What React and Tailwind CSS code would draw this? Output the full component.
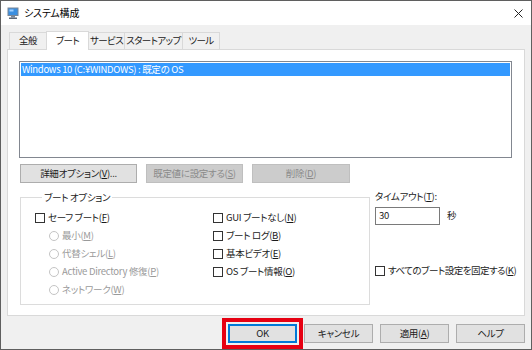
import React from 'react';

const font = { fontFamily: '"Noto Sans CJK JP", sans-serif', fontFeatureSettings: '"palt"' };

function U({ children }) {
  return <span className="underline underline-offset-[1px]">{children}</span>;
}

function Check({ children }) {
  return (
    <div className="flex items-center h-[18px] text-[#1a1a1a]">
      <span className="w-[10px] h-[10px] border border-[#333333] bg-white mr-[3px] shrink-0" />
      <span className="whitespace-nowrap">{children}</span>
    </div>
  );
}

function Radio({ children }) {
  return (
    <div className="flex items-center h-[18px] pl-[14px] text-[#9a9a9a]">
      <span className="w-[10px] h-[10px] rounded-full border border-[#c4c4c4] bg-white mr-[3px] shrink-0" />
      <span className="whitespace-nowrap">{children}</span>
    </div>
  );
}

function Btn({ w, disabled, children }) {
  return (
    <div
      className={
        'h-[19px] flex items-center justify-center border whitespace-nowrap ' +
        (disabled ? 'bg-[#cccccc] border-[#bfbfbf] text-[#8a8a8a]' : 'bg-[#e1e1e1] border-[#adadad] text-[#1a1a1a]')
      }
      style={{ width: w }}
    >
      {children}
    </div>
  );
}

function Tab({ w, active, children }) {
  return (
    <div
      className={
        'flex items-center justify-center border border-b-0 border-[#d9d9d9] whitespace-nowrap -ml-px first:ml-0 tracking-[-0.6px] ' +
        (active ? 'h-[19px] bg-white relative z-10 -mb-px' : 'h-[17px] bg-[#f0f0f0]')
      }
      style={{ width: w }}
    >
      {children}
    </div>
  );
}

function TitleIcon() {
  return (
    <svg width="12" height="12" viewBox="0 0 12 12">
      <rect x="0.5" y="0.5" width="11" height="8.5" fill="#7a8696" />
      <rect x="1.5" y="1.5" width="9" height="6.5" fill="#3b8fe0" />
      <rect x="2.5" y="2.5" width="4" height="2" fill="#9fd0ff" />
      <rect x="4" y="9" width="4" height="1.5" fill="#7a8696" />
      <rect x="2" y="10.5" width="8" height="1.5" fill="#5c6776" />
    </svg>
  );
}

export default function App() {
  return (
    <div className="w-[532px] h-[350px] border border-[#5f5f5f] flex flex-col text-[9.5px] tracking-[-0.3px] leading-none bg-[#f0f0f0] text-[#1a1a1a]" style={font}>
      {/* title bar */}
      <div className="h-[24px] bg-white flex items-center pl-[6px] pr-[8px] shrink-0">
        <TitleIcon />
        <span className="ml-[5px] text-[10px] tracking-[-0.2px] text-black">システム構成</span>
        <svg className="ml-auto" width="9" height="9" viewBox="0 0 9 9">
          <path d="M0.5 0.5L8.5 8.5M8.5 0.5L0.5 8.5" stroke="#222" strokeWidth="1" />
        </svg>
      </div>

      <div className="flex-1 flex flex-col px-[6px] pt-[6px]">
        {/* tabs */}
        <div className="flex items-end h-[18px] pl-[2px]">
          <Tab w={38}>全般</Tab>
          <Tab w={43} active>ブート</Tab>
          <Tab w={37}>サービス</Tab>
          <Tab w={59}>スタートアップ</Tab>
          <Tab w={38}>ツール</Tab>
        </div>

        {/* panel */}
        <div className="h-[267px] border border-[#d9d9d9] bg-white flex flex-col">
          <div className="mt-[11px] ml-[11px] w-[493px] h-[97px] border border-[#828790] bg-white p-px">
            <div className="h-[13px] bg-[#3399ff] text-white flex items-center pl-[1px] whitespace-nowrap">
              Windows 10 (C:¥WINDOWS) : 既定の OS
            </div>
          </div>

          <div className="mt-[6px] ml-[12px] flex gap-[9px]">
            <Btn w={117}>詳細オプション(<U>V</U>)...</Btn>
            <Btn w={97} disabled>既定値に設定する(<U>S</U>)</Btn>
            <Btn w={98} disabled>削除(<U>D</U>)</Btn>
          </div>

          <div className="mt-[7px] flex">
            <fieldset className="ml-[12px] w-[350px] h-[115px] border border-[#dcdcdc] pl-[14px]">
              <legend className="ml-[7px] px-[2px] h-[14px] leading-[14px]">ブート オプション</legend>
              <div className="flex mt-[5px]">
                <div className="w-[178px] flex flex-col">
                  <Check>セーフ ブート(<U>F</U>)</Check>
                  <Radio>最小(<U>M</U>)</Radio>
                  <Radio>代替シェル(<U>L</U>)</Radio>
                  <Radio>Active Directory 修復(<U>P</U>)</Radio>
                  <Radio>ネットワーク(<U>W</U>)</Radio>
                </div>
                <div className="flex flex-col">
                  <Check>GUI ブートなし(<U>N</U>)</Check>
                  <Check>ブート ログ(<U>B</U>)</Check>
                  <Check>基本ビデオ(<U>E</U>)</Check>
                  <Check>OS ブート情報(<U>O</U>)</Check>
                </div>
              </div>
            </fieldset>

            <div className="ml-[5px] flex flex-col">
              <div className="h-[14px] flex items-center">タイムアウト(<U>T</U>):</div>
              <div className="mt-[3px] flex items-center">
                <div className="w-[65px] h-[18px] border border-[#7a7a7a] bg-white flex items-center pl-[3px]">30</div>
                <span className="ml-[7px]">秒</span>
              </div>
              <div className="mt-[37px] tracking-[-0.5px]">
                <Check>すべてのブート設定を固定する(<U>K</U>)</Check>
              </div>
            </div>
          </div>
        </div>

        {/* dialog buttons */}
        <div className="mt-[8px] flex justify-end gap-[7px]">
          <div className="relative">
            <div className="w-[69px] h-[19px] flex items-center justify-center bg-[#e1e1e1] border border-[#0078d7] shadow-[inset_0_0_0_1px_#0078d7]">OK</div>
            <div className="absolute -left-[6px] -right-[6px] -top-[6px] -bottom-[6px] border-4 border-[#e60012]" />
          </div>
          <Btn w={69}>キャンセル</Btn>
          <Btn w={69}>適用(<U>A</U>)</Btn>
          <Btn w={69}>ヘルプ</Btn>
        </div>
      </div>
    </div>
  );
}
